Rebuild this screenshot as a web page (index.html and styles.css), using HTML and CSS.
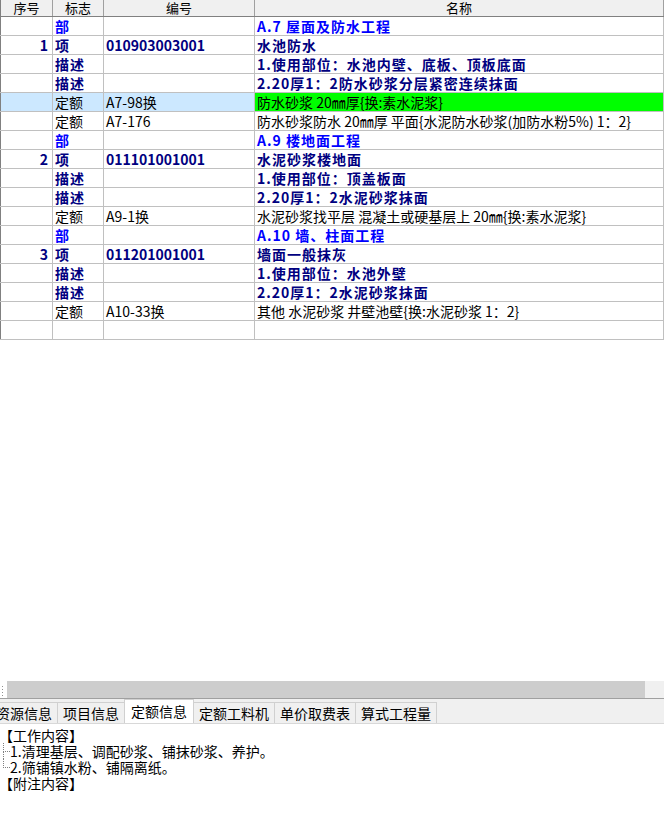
FILE: index.html
```html
<!DOCTYPE html>
<html lang="zh-CN">
<head>
    <meta charset="UTF-8">
    <title>定额信息</title>
    <link rel="stylesheet" href="styles.css">
</head>
<body>
    <div class="grid-area">
        <table class="grid">
            <colgroup>
                <col class="c-no">
                <col class="c-flag">
                <col class="c-code">
                <col class="c-name">
            </colgroup>
            <thead>
                <tr>
                    <th>序号</th>
                    <th>标志</th>
                    <th>编号</th>
                    <th>名称</th>
                </tr>
            </thead>
            <tbody>
                <tr class="bu"><td></td><td class="flag">部</td><td></td><td class="name">A.7 屋面及防水工程</td></tr>
                <tr class="xiang"><td class="num">1</td><td class="flag">项</td><td>010903003001</td><td class="name">水池防水</td></tr>
                <tr class="xiang"><td></td><td class="flag">描述</td><td></td><td class="name">1.使用部位：水池内壁、底板、顶板底面</td></tr>
                <tr class="xiang"><td></td><td class="flag">描述</td><td></td><td class="name">2.20厚1：2防水砂浆分层紧密连续抹面</td></tr>
                <tr class="de current"><td></td><td>定额</td><td>A7-98换</td><td class="hit">防水砂浆 20㎜厚{换:素水泥浆}</td></tr>
                <tr class="de"><td></td><td>定额</td><td>A7-176</td><td>防水砂浆防水 20㎜厚 平面{水泥防水砂浆(加防水粉5%) 1：2}</td></tr>
                <tr class="bu"><td></td><td class="flag">部</td><td></td><td class="name">A.9 楼地面工程</td></tr>
                <tr class="xiang"><td class="num">2</td><td class="flag">项</td><td>011101001001</td><td class="name">水泥砂浆楼地面</td></tr>
                <tr class="xiang"><td></td><td class="flag">描述</td><td></td><td class="name">1.使用部位：顶盖板面</td></tr>
                <tr class="xiang"><td></td><td class="flag">描述</td><td></td><td class="name">2.20厚1：2水泥砂浆抹面</td></tr>
                <tr class="de"><td></td><td>定额</td><td>A9-1换</td><td>水泥砂浆找平层 混凝土或硬基层上 20㎜{换:素水泥浆}</td></tr>
                <tr class="bu"><td></td><td class="flag">部</td><td></td><td class="name">A.10 墙、柱面工程</td></tr>
                <tr class="xiang"><td class="num">3</td><td class="flag">项</td><td>011201001001</td><td class="name">墙面一般抹灰</td></tr>
                <tr class="xiang"><td></td><td class="flag">描述</td><td></td><td class="name">1.使用部位：水池外壁</td></tr>
                <tr class="xiang"><td></td><td class="flag">描述</td><td></td><td class="name">2.20厚1：2水泥砂浆抹面</td></tr>
                <tr class="de"><td></td><td>定额</td><td>A10-33换</td><td>其他 水泥砂浆 井壁池壁{换:水泥砂浆 1：2}</td></tr>
                <tr class="de"><td></td><td></td><td></td><td></td></tr>
            </tbody>
        </table>
    </div>

    <div class="hscroll">
        <span class="grip"></span>
        <span class="thumb"></span>
        <span class="corner"></span>
    </div>

    <div class="tabs">
        <span class="tab first">资源信息</span>
        <span class="tab">项目信息</span>
        <span class="tab active">定额信息</span>
        <span class="tab">定额工料机</span>
        <span class="tab">单价取费表</span>
        <span class="tab">算式工程量</span>
    </div>

    <div class="info">
        <div class="head">【工作内容】</div>
        <div class="tree">
            <div class="leaf">1.清理基层、调配砂浆、铺抹砂浆、养护。</div>
            <div class="leaf last">2.筛铺镇水粉、铺隔离纸。</div>
        </div>
        <div class="head">【附注内容】</div>
    </div>
</body>
</html>
```

FILE: styles.css
```css
body {
    margin: 0;
    width: 664px;
    height: 835px;
    overflow: hidden;
    background: #fff;
    font-family: "Noto Sans CJK SC", "DejaVu Sans", sans-serif;
    font-size: 14px;
    color: #000;
}
.grid-area {
    height: 681px;
}
.grid {
    border-collapse: collapse;
    table-layout: fixed;
    width: 664px;
    border-left: 1px solid #808080;
}
.c-no { width: 52px; }
.c-flag { width: 51px; }
.c-code { width: 151px; }
.grid th {
    height: 16px;
    padding: 0;
    background: #f0f0f0;
    font-weight: normal;
    font-size: 13px;
    line-height: 16px;
    vertical-align: top;
    border-right: 1px solid #a0a0a0;
    border-bottom: 1px solid #808080;
}
.grid th span,
.grid th {
    overflow: visible;
}
.grid td {
    height: 18px;
    padding: 0 2px;
    line-height: 18px;
    white-space: nowrap;
    overflow: hidden;
    border-right: 1px solid #c0c0c0;
    border-bottom: 1px solid #c0c0c0;
}
.grid td.num {
    text-align: right;
    padding-right: 4px;
}
.bu td {
    color: #0000ff;
    font-weight: bold;
}
.xiang td {
    color: #000080;
    font-weight: bold;
}
.grid td.name,
.grid td.flag {
    letter-spacing: 1px;
}
.de td {
    color: #000;
}
.current td {
    background: #cce8ff;
}
.current td.hit {
    background: #00ff00;
}
.hscroll {
    display: flex;
    height: 17px;
    border-bottom: 1px solid #a0a0a0;
}
.grip {
    width: 7px;
    background: repeating-linear-gradient(to bottom, #fff 0 2px, #909090 2px 3px);
    background-size: 1px 100%;
    background-repeat: no-repeat;
    background-position: 2px 3px;
}
.thumb {
    width: 638px;
    background: #cdcdcd;
}
.corner {
    flex: 1;
    background: #f0f0f0;
}
.tabs {
    display: flex;
    align-items: flex-end;
    height: 24px;
    background: #f0f0f0;
    border-bottom: 1px solid #d8d8d8;
    margin-left: -4px;
}
.tab {
    height: 20px;
    padding: 0 5px;
    line-height: 20px;
    font-size: 14px;
    border-right: 1px solid #d0d0d0;
    border-top: 1px solid #d0d0d0;
}
.tab.first {
    padding-left: 0;
}
.tab.active {
    height: 23px;
    line-height: 22px;
    background: #fff;
    border-left: 1px solid #d0d0d0;
    margin-left: -1px;
    padding: 0 6px;
}
.info {
    padding-top: 3px;
    font-size: 14px;
    line-height: 16px;
}
.head {
    margin-left: -1px;
}
.tree .leaf {
    position: relative;
    padding-left: 10px;
}
.tree .leaf::before {
    content: "";
    position: absolute;
    left: 3px;
    top: 0;
    width: 6px;
    height: 8px;
    border-left: 1px dotted #808080;
    border-bottom: 1px dotted #808080;
}
.tree .leaf:not(.last)::after {
    content: "";
    position: absolute;
    left: 3px;
    top: 8px;
    height: 8px;
    border-left: 1px dotted #808080;
}
```
